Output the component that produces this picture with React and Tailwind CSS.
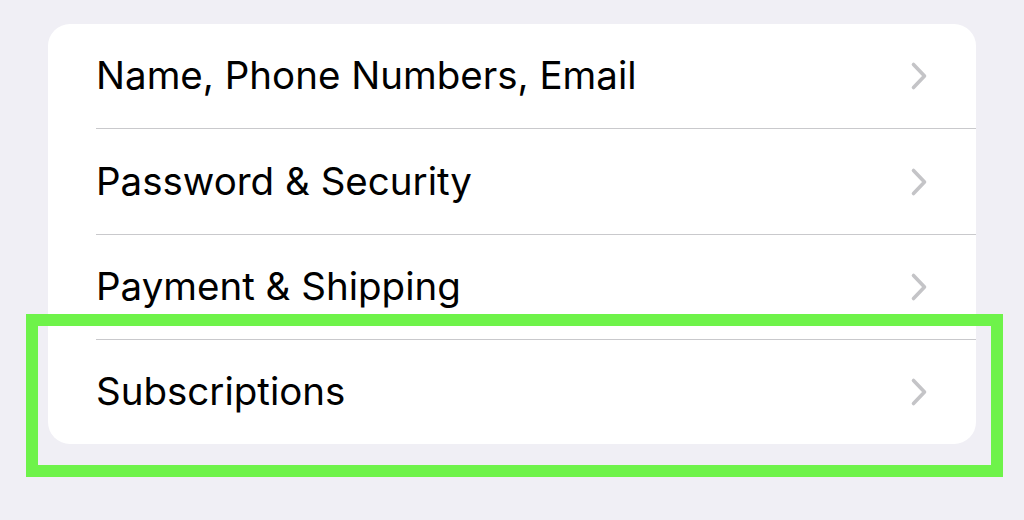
import React from "react";

const items = [
    { label: "Name, Phone Numbers, Email", h: "h-[105px]" },
    { label: "Password & Security", h: "h-[106px]" },
    { label: "Payment & Shipping", h: "h-[105px]" },
    { label: "Subscriptions", h: "h-[104px]" },
];

const Chevron = () => (
    <svg width="18" height="30" viewBox="0 0 18 30" fill="none">
        <path
            d="M3.5 3.5 L14.5 15 L3.5 26.5"
            stroke="#c4c4c7"
            strokeWidth="3.6"
            strokeLinecap="round"
            strokeLinejoin="round"
        />
    </svg>
);

const App = () => {
    return (
        <div className="relative w-[1024px] h-[520px] bg-[#f0eff5] pt-[24px] pl-[48px] overflow-hidden" style={{ fontFamily: "Inter, 'Liberation Sans', sans-serif" }}>
            <div className="w-[928px] bg-white rounded-[22px] pl-[48px]">
                {items.map((item, i) => (
                    <div
                        key={item.label}
                        className={
                            "flex items-center justify-between pr-[48px] " +
                            item.h +
                            (i < items.length - 1 ? " border-b border-[#c9c9cc]" : "")
                        }
                    >
                        <span className="text-[38.5px] text-black">{item.label}</span>
                        <Chevron />
                    </div>
                ))}
            </div>

            {/* highlight */}
            <div className="absolute left-[26px] top-[314px] w-[977px] h-[163px] border-[12px] border-[#6ef34a]" />
        </div>
    );
};

export default App;
